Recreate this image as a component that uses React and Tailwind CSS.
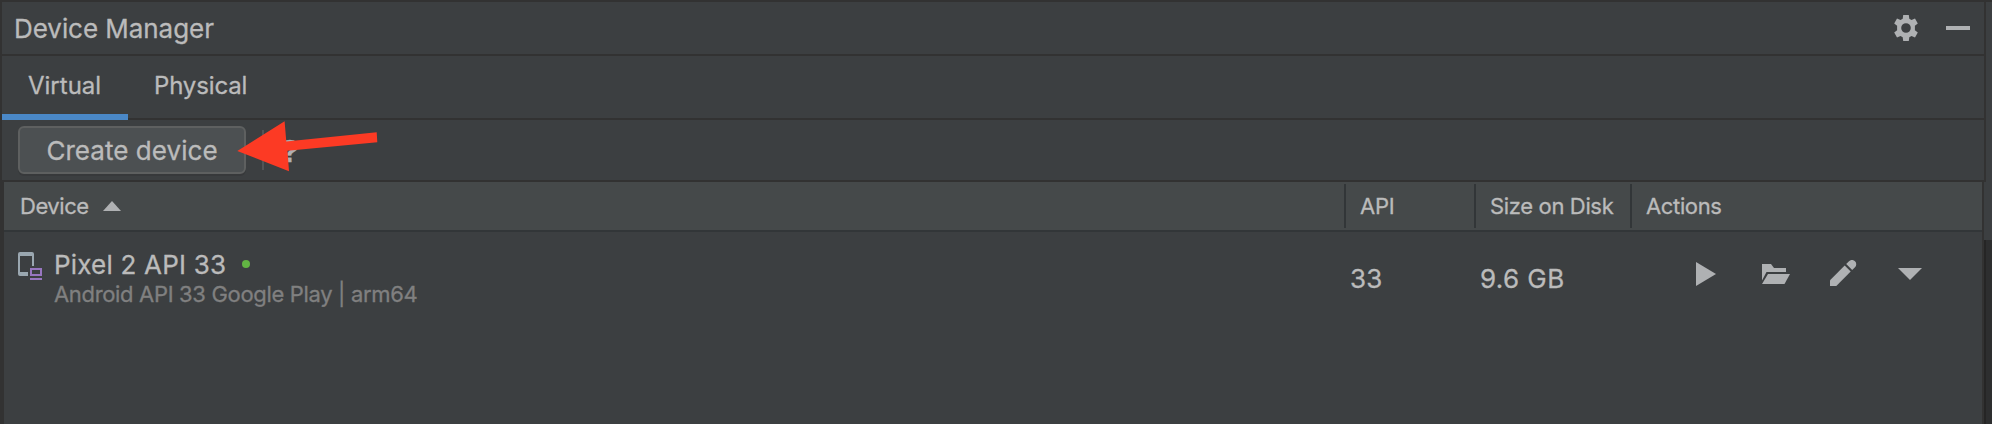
import React from "react";

function Gear() {
  return (
    <svg width="26" height="28" viewBox="0 0 26 28" fill="#afb1b3">
      <path
        fillRule="evenodd"
        d="M10.2 1h5.600l.5 3.800 2.200 1.200 3.500-1.400 2.800 4.800-2.900 2.400v4.400l2.900 2.400-2.800 4.800-3.500-1.400-2.200 1.200-.5 3.800h-5.600l-.5-3.800-2.200-1.200-3.500 1.400-2.800-4.800 2.900-2.400v-4.400L1.200 9.400 4 4.600 7.500 6l2.200-1.200zM13 9.200a4.800 4.800 0 1 0 0 9.600 4.800 4.800 0 0 0 0-9.600z"
      />
    </svg>
  );
}

function PhoneIcon() {
  return (
    <svg width="24" height="28" viewBox="0 0 24 28">
      <path
        fillRule="evenodd"
        fill="#9aa7b0"
        d="M2 0h12a2 2 0 0 1 2 2v12h-2V4H2v16h8v4H2a2 2 0 0 1-2-2V2a2 2 0 0 1 2-2z"
      />
      <path fillRule="evenodd" fill="#9876c0" d="M12 16h12v8H12zM14 18v4h8v-4zM12 26h12v2H12z" />
    </svg>
  );
}

function Title({ className, children }) {
  return <span className={"whitespace-nowrap " + className}>{children}</span>;
}

function HeaderCell({ className, children }) {
  return (
    <div className={"flex h-11 items-center text-[22px] leading-[44px] whitespace-nowrap " + className}>
      {children}
    </div>
  );
}

export default function App() {
  return (
    <div className="relative flex h-[424px] w-[1992px] overflow-hidden border-t-2 border-[#323232] bg-[#3c3f41] font-['Inter',sans-serif] text-[#bbbbbb] [-webkit-text-stroke:0.3px]">
      <div className="flex w-[1986px] shrink-0 flex-col">
        <div className="flex h-[54px] items-center justify-between border-x-2 border-b-2 border-[#323232] pr-[14px] pl-3">
          <Title className="text-[26px] tracking-[-0.05px]">Device Manager</Title>
          <div className="flex items-center gap-[27px]">
            <Gear />
            <div className="h-1 w-6 bg-[#afb1b3]" />
          </div>
        </div>

        <div className="flex h-16 border-x-2 border-b-2 border-[#323232] text-2xl">
          <div className="-mb-0.5 flex w-[126px] items-center border-b-[6px] border-[#4a88c7] pt-0.5 pl-[26px]">
            <Title className="tracking-[0px]">Virtual</Title>
          </div>
          <div className="-mb-0.5 flex items-center border-b-[6px] border-transparent pt-0.5 pl-[26px]">
            <Title className="tracking-[-0.15px]">Physical</Title>
          </div>
        </div>

        <div className="flex h-[62px] items-start border-x-2 border-b-2 border-[#323232] pt-1.5 pl-4">
          <button className="flex h-12 w-[228px] items-center justify-center rounded-md border-2 border-[#5e6060] bg-[#4c5052] text-[26px] whitespace-nowrap shadow-[0_2px_0_#37393b]">
            <Title className="tracking-[0.05px]">Create device</Title>
          </button>
          <div className="mt-1 ml-4 h-10 w-0.5 bg-[#515456]" />
          <div className="mt-[5px] ml-4 font-['Liberation_Sans',sans-serif] text-[32px] leading-10 font-bold text-[#afb1b3]">
            ?
          </div>
        </div>

        <div className="flex w-[1984px] grow flex-col border-r-2 border-l-4 border-[#323232]">
          <div className="flex h-[50px] shrink-0 items-center border-b-2 border-[#323638] bg-[#45494a]">
            <HeaderCell className="w-[1340px] pl-4">
              <Title className="tracking-[-0.45px]">Device</Title>
              <svg className="ml-[14px]" width="18" height="10" viewBox="0 0 18 10">
                <path fill="#afb1b3" d="M9 0l9 10H0z" />
              </svg>
            </HeaderCell>
            <HeaderCell className="w-[130px] border-l-2 border-[#323638] pl-[14px]">
              <Title className="tracking-[-0.2px]">API</Title>
            </HeaderCell>
            <HeaderCell className="w-[156px] border-l-2 border-[#323638] pl-[14px]">
              <Title className="tracking-[-0.35px]">Size on Disk</Title>
            </HeaderCell>
            <HeaderCell className="grow border-l-2 border-[#323638] pl-[14px]">
              <Title className="tracking-[-0.35px]">Actions</Title>
            </HeaderCell>
          </div>

          <div className="flex h-[92px]">
            <div className="flex w-[1346px] pl-[14px]">
              <div className="pt-5">
                <PhoneIcon />
              </div>
              <div className="flex flex-col pt-4 pl-[12px]">
                <div className="flex h-8 items-center text-[26px]">
                  <Title className="tracking-[0.2px]">Pixel 2 API 33</Title>
                  <div className="ml-4 size-2 rounded-full bg-[#62b543]" />
                </div>
                <Title className="text-[22px] leading-7 tracking-[-0.33px] text-[#808080]">
                  Android API 33 Google Play | arm64
                </Title>
              </div>
            </div>
            <div className="w-[130px] pt-[31px] text-[26px] leading-8">
              <Title className="tracking-[0.2px]">33</Title>
            </div>
            <div className="w-[212px] pt-[31px] text-[26px] leading-8">
              <Title className="tracking-[0.4px]">9.6 GB</Title>
            </div>
            <div className="flex items-start pt-7 text-[#afb1b3]">
              <svg width="20" height="24" viewBox="0 0 20 24" className="mt-[2px] ml-1" fill="currentColor">
                <path d="M0 0l20 12L0 24z" />
              </svg>
              <svg width="28" height="20" viewBox="0 0 28 20" className="mt-1 ml-[46px]" fill="currentColor">
                <path d="M0 0h9l3 4h12v4H4.500L0 16.500z" />
                <path d="M6 10h22l-5.500 10H0z" />
              </svg>
              <svg width="27" height="26" viewBox="0 0 27 26" className="ml-10" fill="currentColor">
                <path d="M0 20.300L14.700 5.600l6 6L6.300 26H0z" />
                <path d="M16.200 4.100l2.800-2.900a4 4 0 0 1 6 6l-2.800 2.900z" />
              </svg>
              <svg width="24" height="12" viewBox="0 0 24 12" className="mt-2 ml-[41px]" fill="currentColor">
                <path d="M0 0h24L12 12z" />
              </svg>
            </div>
          </div>
        </div>
      </div>

      <div className="absolute top-[238px] right-0 bottom-0 w-2 border-l-2 border-[#252525] bg-[#2d2e2f]" />

      <svg className="absolute top-[118px] left-[236px]" width="144" height="54" viewBox="236 120 144 54">
        <path fill="#fc3a24" d="M237.300 151L284.600 121.300L286.300 141.500L376.700 132.300L377.300 142.200L287.500 150.700L289 171.300z" />
      </svg>
    </div>
  );
}
